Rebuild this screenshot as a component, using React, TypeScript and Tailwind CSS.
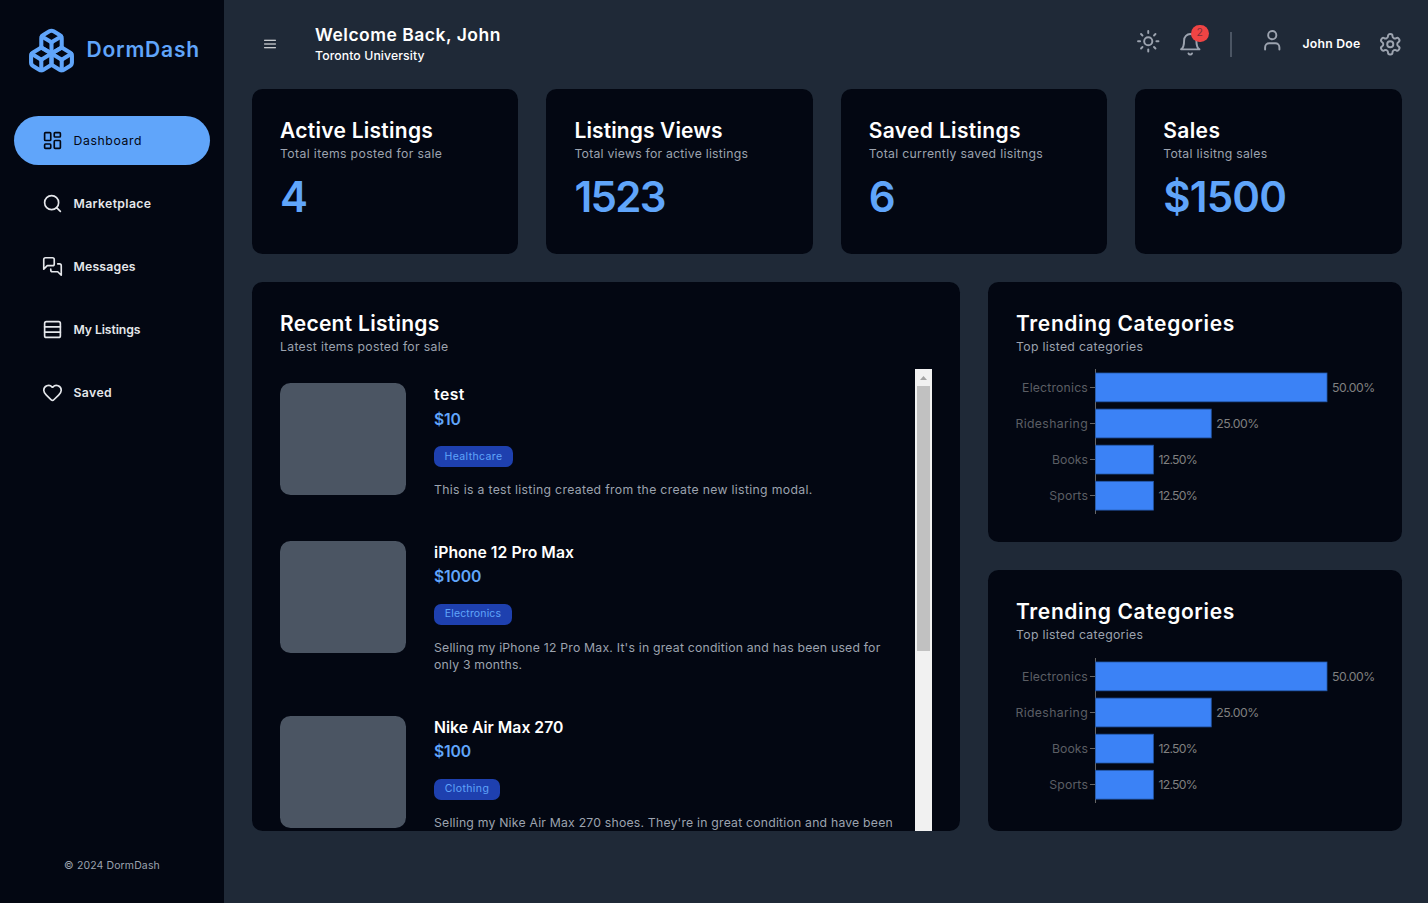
import React from "react";
import { Boxes, Heart, LayoutDashboard, Rows3, Search, Sun, User } from "lucide-react";
import { RxHamburgerMenu } from "react-icons/rx";

function Messages({ size, strokeWidth }: { size?: number | string; strokeWidth?: number | string }) {
  return (
    <svg width={size} height={size} viewBox="0 0 24 24" fill="none" stroke="currentColor" strokeWidth={strokeWidth} strokeLinecap="round" strokeLinejoin="round">
      <path d="M14 9a2 2 0 0 1-2 2H6l-4 4V4c0-1.1.9-2 2-2h8a2 2 0 0 1 2 2v5Z" />
      <path d="M18 9h2a2 2 0 0 1 2 2v11l-4-4h-6a2 2 0 0 1-2-2v-1" />
    </svg>
  );
}

const navItems = [
  { label: "Dashboard", icon: LayoutDashboard, text: "font-normal tracking-[0.6px]" },
  { label: "Marketplace", icon: Search, text: "font-semibold tracking-[0.36px]" },
  { label: "Messages", icon: Messages, text: "font-semibold tracking-[0.2px]" },
  { label: "My Listings", icon: Rows3, text: "font-semibold tracking-[-0.1px]" },
  { label: "Saved", icon: Heart, text: "font-semibold tracking-[0.4px]" },
];

const stats = [
  { title: "Active Listings", caption: "Total items posted for sale", value: "4", titleText: "tracking-[0.27px]", captionText: "tracking-[0.36px]", valueText: "" },
  { title: "Listings Views", caption: "Total views for active listings", value: "1523", titleText: "tracking-[0.12px]", captionText: "tracking-[0.23px]", valueText: "tracking-[-1.7px]" },
  { title: "Saved Listings", caption: "Total currently saved lisitngs", value: "6", titleText: "tracking-[0.33px]", captionText: "tracking-[0.3px]", valueText: "" },
  { title: "Sales", caption: "Total lisitng sales", value: "$1500", titleText: "tracking-[0.4px]", captionText: "tracking-[0.27px]", valueText: "tracking-[-0.8px]" },
];

const listings = [
  {
    title: "test",
    price: "$10",
    category: "Healthcare",
    titleText: "tracking-[0.5px]",
    badge: "w-[79px] tracking-[0.36px]",
    height: "h-[157.5px]",
    body: "tracking-[0.32px]",
    lines: ["This is a test listing created from the create new listing modal."],
  },
  {
    title: "iPhone 12 Pro Max",
    price: "$1000",
    category: "Electronics",
    titleText: "tracking-[0.06px]",
    badge: "w-[78px] tracking-[0.15px]",
    height: "h-[175px]",
    body: "tracking-[0.2px]",
    lines: ["Selling my iPhone 12 Pro Max. It's in great condition and has been used for", "only 3 months."],
  },
  {
    title: "Nike Air Max 270",
    price: "$100",
    category: "Clothing",
    titleText: "",
    badge: "w-[66px] tracking-[0.4px]",
    height: "h-[175px]",
    body: "tracking-[0.2px]",
    lines: ["Selling my Nike Air Max 270 shoes. They're in great condition and have been"],
  },
];

const categories = [
  { name: "Electronics", share: 50, nameText: "tracking-[0.18px]", shareText: "tracking-[-0.45px]" },
  { name: "Ridesharing", share: 25, nameText: "tracking-[0.36px]", shareText: "tracking-[-0.45px]" },
  { name: "Books", share: 12.5, nameText: "", shareText: "tracking-[-0.7px]" },
  { name: "Sports", share: 12.5, nameText: "tracking-[0.15px]", shareText: "tracking-[-0.7px]" },
];

interface HeadingProps {
  title: string;
  caption: string;
  titleText: string;
  captionText: string;
}

function CardHeading({ title, caption, titleText, captionText }: HeadingProps) {
  return (
    <div>
      <h2 className={`text-[21px] leading-7 font-semibold whitespace-nowrap text-white ${titleText}`}>{title}</h2>
      <p className={`text-[12.25px] leading-[17.5px] whitespace-nowrap text-[#9ca3af] ${captionText}`}>{caption}</p>
    </div>
  );
}

function Sidebar() {
  return (
    <aside className="flex w-[224px] shrink-0 flex-col bg-[#030712]">
      <div className="flex h-[100px] items-center pl-[27px] text-[#60a5fa]">
        <Boxes size={49} className="shrink-0" />
        <span className="ml-[10.5px] text-[21px] leading-7 font-semibold tracking-[0.8px]">DormDash</span>
      </div>
      <nav className="mt-4 flex flex-col gap-[14px] px-[14px]">
        {navItems.map(({ label, icon: Icon, text }, i) => (
          <a
            key={label}
            className={
              i === 0
                ? "flex h-[49px] items-center gap-[10.5px] rounded-full bg-[#60a5fa] pl-7 text-[#030712]"
                : "flex h-[49px] items-center gap-[10.5px] rounded-full pl-7 text-[#e5e7eb]"
            }
          >
            <Icon size={21} strokeWidth={1.9} />
            <span className={`text-[12.25px] leading-[17.5px] ${text}`}>{label}</span>
          </a>
        ))}
      </nav>
      <p className="mt-auto mb-[29px] text-center text-[10.5px] leading-[17px] tracking-[0.12px] text-[#9ca3af]">© 2024 DormDash</p>
    </aside>
  );
}

function Bell() {
  return (
    <svg width="24.5" height="24.5" viewBox="0 0 24 24" fill="none" stroke="currentColor" strokeWidth="1.9" strokeLinecap="round" strokeLinejoin="round">
      <path d="M6 8a6 6 0 0 1 12 0c0 7 3 9 3 9H3s3-2 3-9" />
      <path d="M10.3 21a1.94 1.94 0 0 0 3.4 0" />
    </svg>
  );
}

function Gear() {
  return (
    <svg width="24.5" height="24.5" viewBox="0 0 24 24" fill="none" stroke="currentColor" strokeWidth="1.9" strokeLinecap="round" strokeLinejoin="round">
      <path d="M12.22 2h-.44a2 2 0 0 0-2 2v.18a2 2 0 0 1-1 1.73l-.43.25a2 2 0 0 1-2 0l-.15-.08a2 2 0 0 0-2.73.73l-.22.38a2 2 0 0 0 .73 2.73l.15.1a2 2 0 0 1 1 1.72v.51a2 2 0 0 1-1 1.74l-.15.09a2 2 0 0 0-.73 2.73l.22.38a2 2 0 0 0 2.73.73l.15-.08a2 2 0 0 1 2 0l.43.25a2 2 0 0 1 1 1.73V20a2 2 0 0 0 2 2h.44a2 2 0 0 0 2-2v-.18a2 2 0 0 1 1-1.73l.43-.25a2 2 0 0 1 2 0l.15.08a2 2 0 0 0 2.73-.73l.22-.39a2 2 0 0 0-.73-2.73l-.15-.08a2 2 0 0 1-1-1.74v-.5a2 2 0 0 1 1-1.74l.15-.09a2 2 0 0 0 .73-2.73l-.22-.38a2 2 0 0 0-2.73-.73l-.15.08a2 2 0 0 1-2 0l-.43-.25a2 2 0 0 1-1-1.73V4a2 2 0 0 0-2-2z" />
      <circle cx="12" cy="12" r="3" />
    </svg>
  );
}

function TopBar() {
  return (
    <header className="mb-[2px] flex h-[87px] items-center pl-[39px]">
      <RxHamburgerMenu size={14} className="text-white" />
      <div className="ml-[38px] text-white">
        <h1 className="text-[17.5px] leading-[24.5px] font-semibold tracking-[0.5px] whitespace-nowrap">Welcome Back, John</h1>
        <p className="text-[12.25px] leading-[17.5px] font-medium tracking-[0.1px] whitespace-nowrap">Toronto University</p>
      </div>
      <div className="ml-auto flex items-center pt-px text-[#9ca3af]">
        <Sun size={24.5} strokeWidth={1.9} className="mb-[6px]" />
        <div className="relative ml-[17px]">
          <Bell />
          <span className="absolute -top-[7px] left-[13.5px] flex size-[17.5px] items-center justify-center rounded-full bg-[#ef4444] pb-px text-[10.5px] text-[#7a2f3a]">
            2
          </span>
        </div>
        <div className="ml-[28px] h-[25px] w-[2px] bg-[#4b5563]" />
        <User size={24.5} strokeWidth={1.9} className="mb-[8px] ml-[28px]" />
        <span className="ml-[18px] text-[12.25px] font-semibold tracking-[0.22px] whitespace-nowrap text-white">John Doe</span>
        <span className="ml-[17px]">
          <Gear />
        </span>
      </div>
    </header>
  );
}

function RecentListings() {
  return (
    <section className="flex h-[549px] flex-col overflow-hidden rounded-[10.5px] bg-[#030712] px-7 pt-7">
      <CardHeading title="Recent Listings" caption="Latest items posted for sale" titleText="tracking-[0.28px]" captionText="tracking-[0.31px]" />
      <div className="mt-[13.5px] flex min-h-0 flex-1">
        <div className="min-w-0 flex-1 overflow-hidden pt-[14px]">
          {listings.map((item) => (
            <article key={item.title} className={`flex gap-7 ${item.height}`}>
              <div className="h-[112px] w-[126px] shrink-0 rounded-[10.5px] bg-[#4b5563]" />
              <div className="min-w-0">
                <h3 className={`text-[15.75px] leading-[24.5px] font-semibold text-white ${item.titleText}`}>{item.title}</h3>
                <p className="text-[15.75px] leading-[24.5px] font-semibold tracking-[-0.2px] text-[#60a5fa]">{item.price}</p>
                <div className={`mt-[14px] flex h-[21px] items-center justify-center rounded-[7px] bg-[#1e40af] text-[10.5px] text-[#60a5fa] ${item.badge}`}>
                  {item.category}
                </div>
                <div className={`mt-[14px] text-[12.25px] leading-[17.5px] whitespace-nowrap text-[#9ca3af] ${item.body}`}>
                  {item.lines.map((line) => (
                    <p key={line}>{line}</p>
                  ))}
                </div>
              </div>
            </article>
          ))}
        </div>
        <div className="flex w-[17px] shrink-0 flex-col items-center bg-[#f1f1f1]">
          <svg width="17" height="17" viewBox="0 0 17 17" className="shrink-0">
            <path d="M5 11h7L8.5 7z" fill="#a3a3a3" />
          </svg>
          <div className="h-[265px] w-[13px] bg-[#c1c1c1]" />
        </div>
      </div>
    </section>
  );
}

function CategoryChart() {
  return (
    <svg width="386" height="150" viewBox="0 0 386 150" className="-ml-1 shrink-0 overflow-visible font-[Inter] text-[12.25px]">
      <path d="M83.5 2v145" stroke="#666" />
      {categories.map((c, i) => {
        const y = 6 + i * 36.1;
        const width = c.share * 4.63;
        return (
          <g key={c.name}>
            <text x="76" y={y + 18.5} textAnchor="end" fill="#5b5e64" className={c.nameText}>{c.name}</text>
            <path d={`M78 ${Math.round(y + 13.5) + 0.5}h6`} stroke="#666" />
            <rect x="83.5" y={y} width={width} height="28.8" fill="#3b82f6" stroke="#2457a8" strokeWidth="0.8" />
            <text x={83.5 + width + 5} y={y + 18.5} fill="#808080" className={c.shareText}>{c.share.toFixed(2)}%</text>
          </g>
        );
      })}
    </svg>
  );
}

function TrendingCard({ height, chartGap }: { height: string; chartGap: string }) {
  return (
    <section className={`flex flex-col rounded-[10.5px] bg-[#030712] px-7 pt-7 ${height}`}>
      <CardHeading title="Trending Categories" caption="Top listed categories" titleText="tracking-[0.64px]" captionText="tracking-[0.3px]" />
      <div className={chartGap}>
        <CategoryChart />
      </div>
    </section>
  );
}

export default function App() {
  return (
    <div className="flex h-[903px] w-[1428px] overflow-hidden bg-[#1f2937] font-[Inter,sans-serif]">
      <Sidebar />
      <main className="flex flex-1 flex-col pr-[26px] pl-7">
        <div className="-ml-7">
          <TopBar />
        </div>
        <div className="grid grid-cols-[266.4px_266.4px_266.4px_266.4px] gap-7">
          {stats.map((s) => (
            <section key={s.title} className="h-[165px] rounded-[10.5px] bg-[#030712] p-7">
              <CardHeading title={s.title} caption={s.caption} titleText={s.titleText} captionText={s.captionText} />
              <p className={`mt-[13px] text-[42px] leading-[42px] font-semibold text-[#60a5fa] ${s.valueText}`}>{s.value}</p>
            </section>
          ))}
        </div>
        <div className="mt-7 grid grid-cols-[708px_414px] gap-7">
          <RecentListings />
          <div className="flex flex-col gap-7">
            <TrendingCard height="h-[260px]" chartGap="mt-[11.5px]" />
            <TrendingCard height="h-[261px]" chartGap="mt-[12.5px]" />
          </div>
        </div>
      </main>
    </div>
  );
}
